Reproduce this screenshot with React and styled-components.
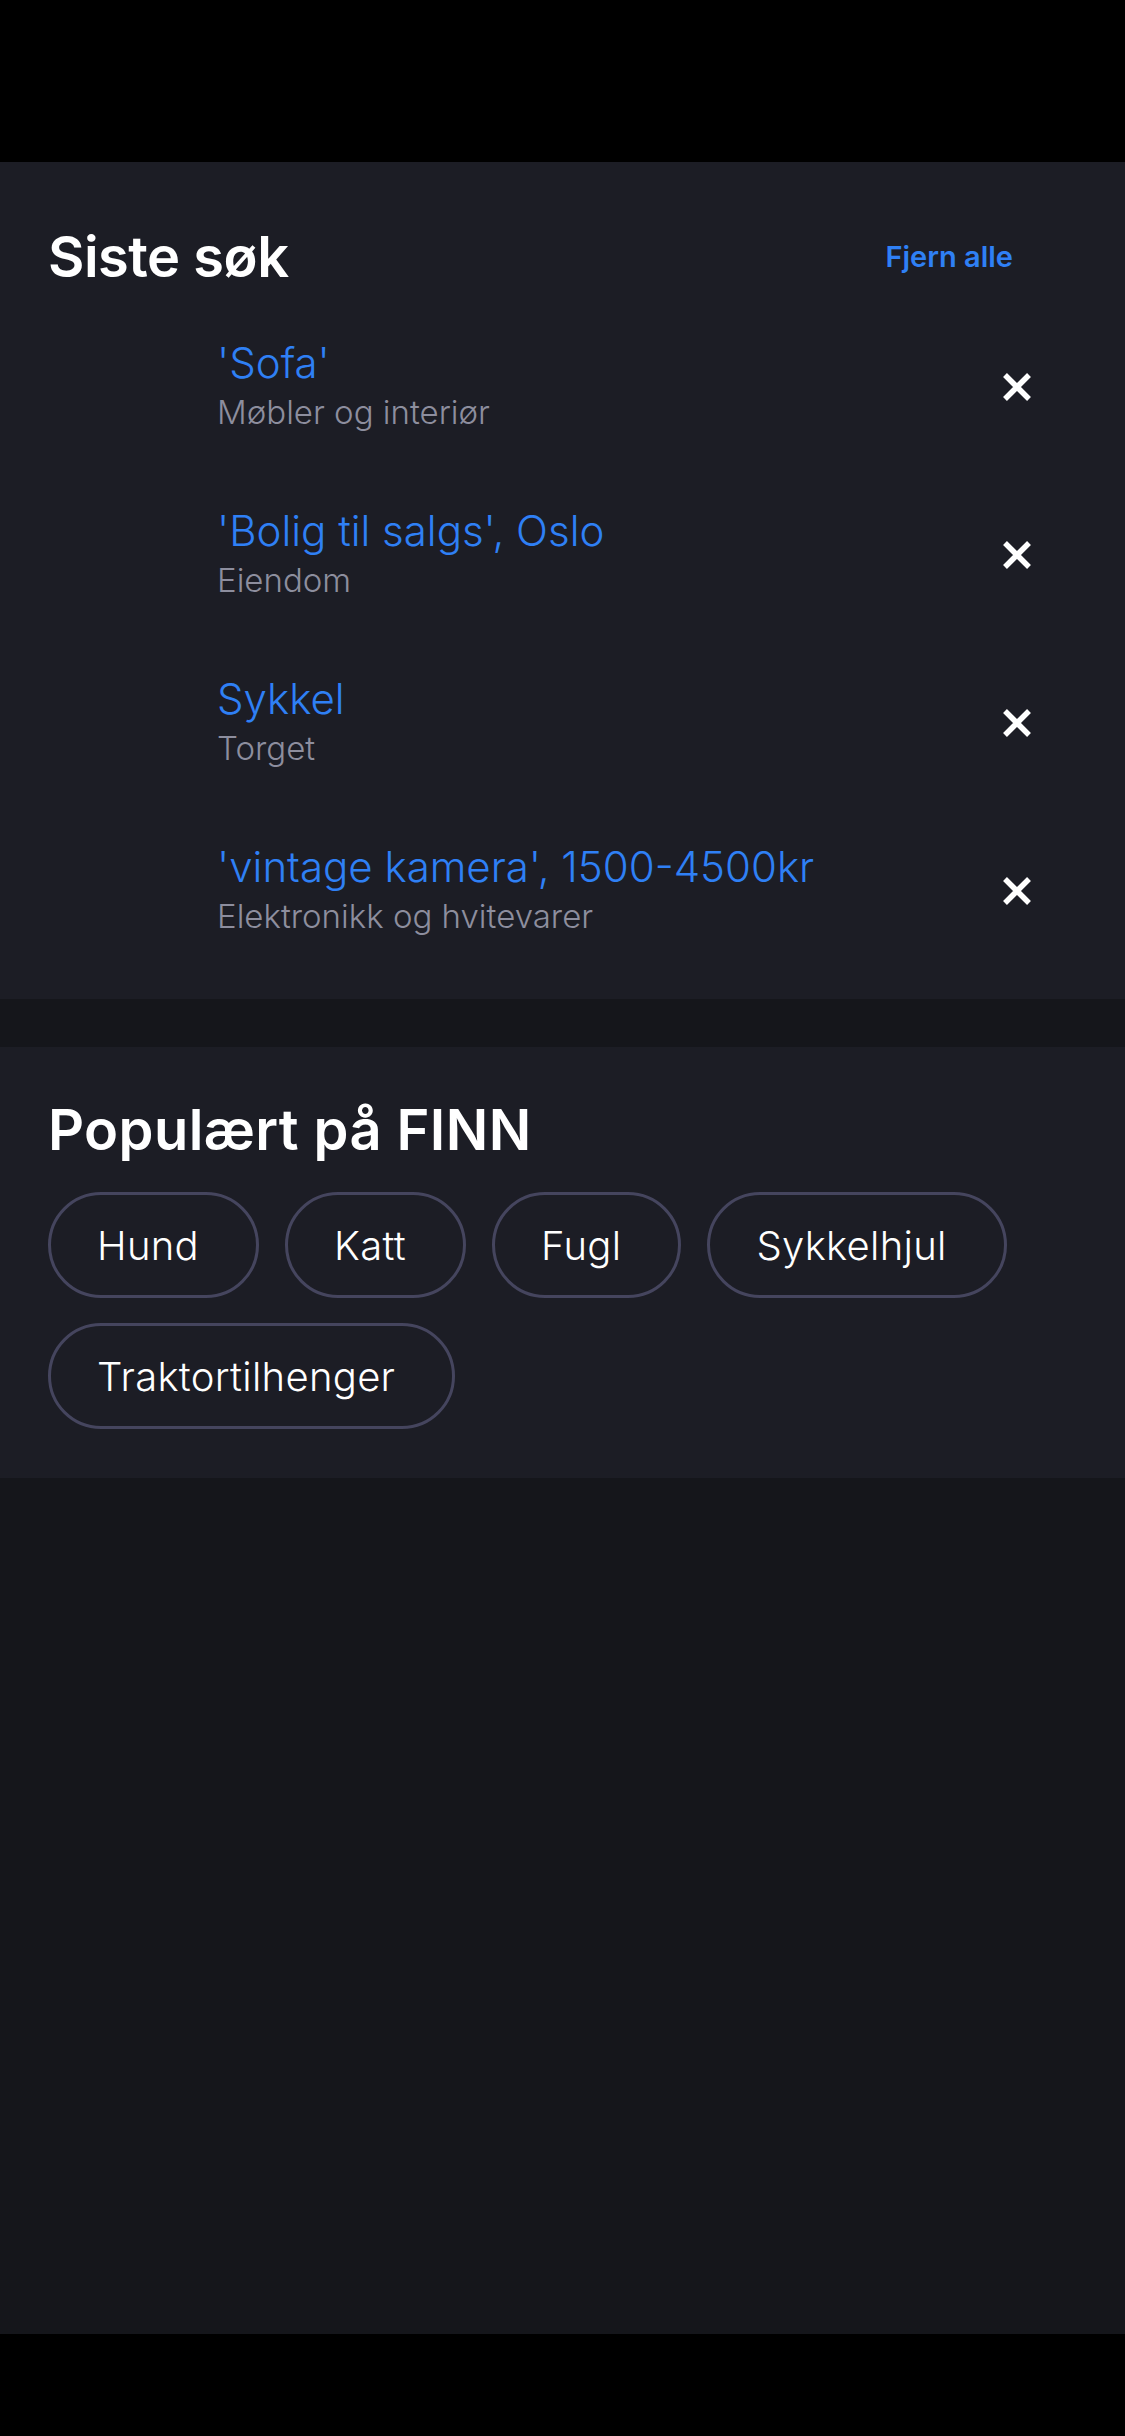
import styled, { createGlobalStyle } from "styled-components";

const GlobalStyle = createGlobalStyle`
  html, body {
    margin: 0;
    padding: 0;
    background: #000;
  }
  body {
    font-family: Inter, "Noto Sans", "Liberation Sans", sans-serif;
    -webkit-font-smoothing: antialiased;
  }
  * {
    box-sizing: border-box;
  }
`;

const Screen = styled.div`
  width: 1125px;
  min-height: 2436px;
  display: flex;
  flex-direction: column;
  background: #000;
`;

const StatusBar = styled.div`
  height: 162px;
  background: #000;
`;

const HomeBar = styled.div`
  height: 102px;
  background: #000;
`;

const Content = styled.main`
  flex: 1;
  display: flex;
  flex-direction: column;
  gap: 48px;
  background: #15161b;
`;

const Panel = styled.section`
  background: #1c1d25;
  padding: ${(p) => p.$pad};
`;

const Header = styled.div`
  height: 68px;
  display: flex;
  align-items: center;
  justify-content: space-between;
  padding-right: 64px;
`;

const Title = styled.h2`
  margin: 0;
  font-size: 56px;
  line-height: 68px;
  font-weight: 600;
  color: #fff;
  letter-spacing: ${(p) => p.$tracking || "0"};
`;

const ClearAll = styled.button`
  border: 0;
  background: none;
  padding: 0;
  font-family: inherit;
  font-size: 29px;
  line-height: 36px;
  font-weight: 600;
  color: #2f80f5;
  cursor: pointer;
`;

const List = styled.ul`
  list-style: none;
  margin: 12px 0 0;
  padding: 0;
`;

const Row = styled.li`
  height: 168px;
  display: flex;
  align-items: center;
  justify-content: space-between;
  padding: 0 45px 0 169px;
`;

const RowText = styled.div`
  display: flex;
  flex-direction: column;
`;

const Query = styled.span`
  font-size: 42px;
  line-height: 50px;
  font-weight: 300;
  color: #2f80f5;
  white-space: nowrap;
`;

const Category = styled.span`
  font-size: 33px;
  line-height: 48px;
  font-weight: 300;
  color: #8d8e9e;
`;

const CloseButton = styled.button`
  width: 30px;
  height: 30px;
  border: 0;
  padding: 0;
  background: none;
  display: flex;
  cursor: pointer;
`;

const Chips = styled.div`
  display: flex;
  flex-wrap: wrap;
  gap: 25px 26px;
  margin-top: 28px;
`;

const Chip = styled.button`
  height: 106px;
  padding: 0 57px 0 46px;
  border: 3px solid #45455e;
  border-radius: 53px;
  background: transparent;
  color: #fff;
  font-family: inherit;
  font-size: 40px;
  font-weight: 300;
  letter-spacing: 0.3px;
  cursor: pointer;
`;

const CloseIcon = () => (
  <svg width="30" height="30" viewBox="0 0 30 30">
    <path d="M3 3L27 27M27 3L3 27" stroke="#fff" strokeWidth="5.5" />
  </svg>
);

const recent = [
  { query: "'Sofa'", category: "Møbler og interiør" },
  { query: "'Bolig til salgs', Oslo", category: "Eiendom" },
  { query: "Sykkel", category: "Torget" },
  { query: "'vintage kamera', 1500-4500kr", category: "Elektronikk og hvitevarer" },
];

const popular = ["Hund", "Katt", "Fugl", "Sykkelhjul", "Traktortilhenger"];

export default function App() {
  return (
    <>
      <GlobalStyle />
      <Screen>
        <StatusBar />
        <Content>
          <Panel $pad="61px 48px 24px">
            <Header>
              <Title $tracking="-0.5px">Siste søk</Title>
              <ClearAll>Fjern alle</ClearAll>
            </Header>
            <List>
              {recent.map((r) => (
                <Row key={r.query}>
                  <RowText>
                    <Query>{r.query}</Query>
                    <Category>{r.category}</Category>
                  </RowText>
                  <CloseButton aria-label="Fjern">
                    <CloseIcon />
                  </CloseButton>
                </Row>
              ))}
            </List>
          </Panel>
          <Panel $pad="49px 48px 49px">
            <Title $tracking="0.4px">Populært på FINN</Title>
            <Chips>
              {popular.map((p) => (
                <Chip key={p}>{p}</Chip>
              ))}
            </Chips>
          </Panel>
        </Content>
        <HomeBar />
      </Screen>
    </>
  );
}
